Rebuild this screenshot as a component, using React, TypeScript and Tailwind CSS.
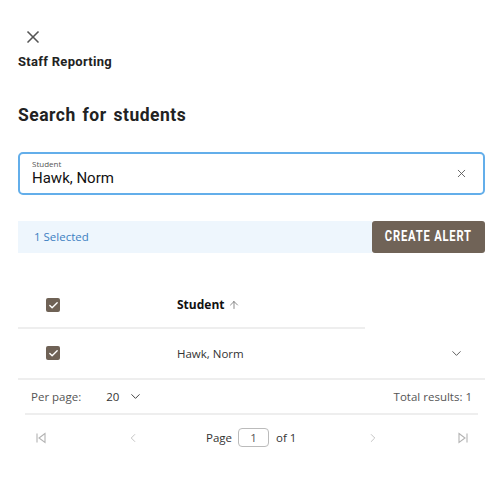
import { X, ArrowUp, ChevronDown, ChevronLeft, ChevronRight, Check } from "lucide-react";

function FirstIcon() {
  return (
    <svg width="12" height="12" viewBox="0 0 12 12" fill="none" stroke="#b3b3b3" strokeWidth="1.1">
      <path d="M2 1.5v9" />
      <path d="M10 1.5 4 6l6 4.5z" />
    </svg>
  );
}

function LastIcon() {
  return (
    <svg width="12" height="12" viewBox="0 0 12 12" fill="none" stroke="#b3b3b3" strokeWidth="1.1">
      <path d="M10 1.5v9" />
      <path d="M2 1.5 8 6l-6 4.5z" />
    </svg>
  );
}

function Checkbox() {
  return (
    <span className="flex size-[14px] items-center justify-center rounded-[2px] bg-[#6f6256]">
      <Check className="size-[11px] text-white" strokeWidth={3} aria-hidden="true" />
    </span>
  );
}

export default function App() {
  return (
    <div className="h-[500px] w-[500px] bg-white font-['Roboto',sans-serif] text-[#222]">
      <div className="pl-[18px] pr-[15px] pt-[27px]">
        <button type="button" className="ml-[5px] block text-[#555]">
          <X className="size-[20px]" strokeWidth={2} aria-hidden="true" />
        </button>
        <div className="mt-[5px] text-[13px] font-bold tracking-[0.3px] text-[#222]">Staff Reporting</div>
        <h1 className="mt-[30px] text-[17.5px] font-bold tracking-[0.5px] [word-spacing:2px] text-[#222]">
          Search for students
        </h1>

        <div className="mt-[24px] flex h-[43px] items-center rounded-[5px] border-2 border-[#63aeea] pl-[12px] pr-[15px]">
          <div className="flex-1">
            <div className="font-['Open_Sans',sans-serif] text-[8px] leading-[10px] text-[#555]">Student</div>
            <div className="font-['Roboto',sans-serif] text-[15px] leading-[18px] text-[#111]">Hawk, Norm</div>
          </div>
          <X className="size-[13px] text-[#555]" strokeWidth={1.6} aria-hidden="true" />
        </div>

        <div className="mt-[26px] flex h-[32px] items-stretch">
          <div className="flex flex-1 items-center bg-[#eef6fd] pl-[16px] font-['Open_Sans',sans-serif] text-[11.5px] text-[#3c7fc2]">
            1 Selected
          </div>
          <button
            type="button"
            className="flex w-[113px] items-center justify-center rounded-[3px] bg-[#706357] font-['Roboto',sans-serif] text-white"
          >
            <span className="inline-block scale-x-[0.8] whitespace-nowrap text-[14px] font-bold tracking-[1px]">
              CREATE ALERT
            </span>
          </button>
        </div>

        <div className="mt-[31px] font-['Open_Sans',sans-serif]">
          <div className="flex h-[45px] w-[347px] items-center border-b-2 border-[#eeeeee]">
            <div className="w-[159px] pl-[28px]">
              <Checkbox />
            </div>
            <div className="flex items-center gap-[4px] text-[12px] font-bold text-[#111]">
              Student
              <ArrowUp className="size-[12px] text-[#666]" strokeWidth={1.5} aria-hidden="true" />
            </div>
          </div>
          <div className="flex h-[51px] items-center border-b-2 border-[#eeeeee]">
            <div className="w-[159px] pl-[28px]">
              <Checkbox />
            </div>
            <div className="flex-1 text-[11.5px] text-[#333]">Hawk, Norm</div>
            <ChevronDown className="mr-[21px] size-[15px] text-[#555]" strokeWidth={1.5} aria-hidden="true" />
          </div>

          <div className="mx-[7px] flex h-[35px] items-center border-b-2 border-[#eeeeee] pl-[6px] pr-[6px] text-[11.5px] text-[#555]">
            <span>Per page:</span>
            <span className="ml-[25px] text-[#333]">20</span>
            <ChevronDown className="ml-[9px] size-[15px] text-[#444]" strokeWidth={1.6} aria-hidden="true" />
            <span className="ml-auto">Total results: 1</span>
          </div>

          <div className="mt-[11px] flex h-[24px] items-center text-[11.5px] text-[#333]">
            <div className="w-[72px] pl-[17px]">
              <FirstIcon />
            </div>
            <div className="w-[116px] pl-[36px]">
              <ChevronLeft className="size-[14px] text-[#b3b3b3]" strokeWidth={1.3} aria-hidden="true" />
            </div>
            <span>Page</span>
            <span className="ml-[6px] flex h-[19px] w-[31px] items-center justify-center rounded-[4px] border border-[#bbbbbb] text-[#555]">
              1
            </span>
            <span className="ml-[7px]">of 1</span>
            <div className="ml-[70px]">
              <ChevronRight className="size-[14px] text-[#b3b3b3]" strokeWidth={1.3} aria-hidden="true" />
            </div>
            <div className="ml-auto pr-[16px]">
              <LastIcon />
            </div>
          </div>
        </div>
      </div>
    </div>
  );
}
